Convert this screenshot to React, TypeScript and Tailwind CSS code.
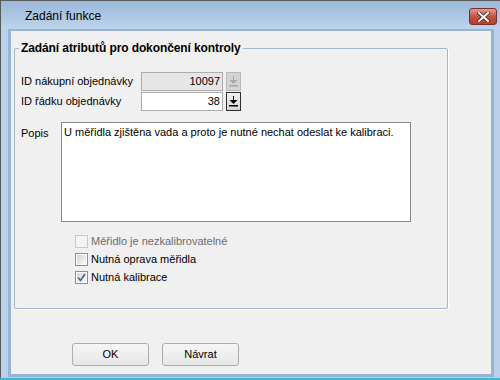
import React from "react";

const font = { fontFamily: '"Liberation Sans", Arial, sans-serif' };

function ArrowIcon({ color }: { color: string }) {
  return (
    <svg width="9" height="11" viewBox="0 0 9 11">
      <rect x="4" y="0" width="1" height="4" fill={color} />
      <polygon points="0.5,4 8.5,4 4.5,8" fill={color} />
      <rect x="0" y="9" width="9" height="1.5" fill={color} />
    </svg>
  );
}

function Checkbox({ checked, disabled, label }: { checked?: boolean; disabled?: boolean; label: string }) {
  return (
    <div className="flex items-center h-[18px]">
      <div
        className={
          disabled
            ? "w-[13px] h-[13px] border border-[#c8c8c8] bg-[#f4f4f4]"
            : "w-[13px] h-[13px] border border-[#8e8f8f] p-[1px] bg-white"
        }
      >
        {!disabled && (
          <div className="w-full h-full bg-gradient-to-br from-[#d6d6d6] to-[#f8f8f8] relative">
            {checked && (
              <svg width="9" height="9" viewBox="0 0 9 9" className="absolute left-0 top-0">
                <path d="M1 4.5 L3.5 7.5 L8 1" stroke="#4b5e96" strokeWidth="1.6" fill="none" />
              </svg>
            )}
          </div>
        )}
      </div>
      <span className={"ml-[3px] text-[11px] " + (disabled ? "text-[#6d6d6d]" : "text-black")}>{label}</span>
    </div>
  );
}

export default function App() {
  return (
    <div className="w-[500px] h-[380px] overflow-hidden relative bg-[#b9d1ea]" style={font}>
      <div className="h-full flex flex-col border-t border-l border-[#5a5a5a]">
        {/* title bar */}
        <div className="h-[28px] flex items-center bg-gradient-to-b from-[#9ab8d9] to-[#bdd4ec] pl-[24px] pr-[3px]">
          <span className="text-[12px] text-black flex-1 pt-[1px]">Zadání funkce</span>
          <div className="w-[28px] h-[17px] mt-[3px] rounded-[3px] border border-[#7a2f2a] bg-gradient-to-b from-[#e19a8e] via-[#c8503f] to-[#b5412f] flex items-center justify-center">
            <svg width="13" height="10" viewBox="0 0 13 10">
              <path d="M2 1 L11 9 M11 1 L2 9" stroke="#4a2a28" strokeWidth="3.6" strokeLinecap="square" />
              <path d="M2 1 L11 9 M11 1 L2 9" stroke="#ffffff" strokeWidth="2" strokeLinecap="square" />
            </svg>
          </div>
        </div>
        {/* client */}
        <div className="ml-[7px] mr-[6px] border-t-[2px] border-x-[3px] border-b-[3px] border-[#99b4d1] bg-[#f0f0f0] h-[348px] flex flex-col">
          <div className="ml-[3px] mt-[17px] w-[434px] h-[261px] border border-[#a0b8d0] rounded-[2px] relative shadow-[1px_1px_0_#ffffff]">
            <span className="absolute left-[4px] top-[-9px] px-[2px] bg-[#f0f0f0] text-[12px] font-bold text-black leading-[16px] tracking-[-0.1px] whitespace-nowrap">
              Zadání atributů pro dokončení kontroly
            </span>
            <div className="pl-[6px] pt-[23px] flex flex-col text-[11px] text-black">
              <div className="flex items-center h-[19px]">
                <span className="w-[120px] shrink-0 whitespace-nowrap">ID nákupní objednávky</span>
                <div className="w-[82px] h-[19px] border border-[#adadad] bg-[#e6e6e6] text-right pr-[2px] leading-[17px]">10097</div>
                <div className="ml-[3px] w-[15px] h-[19px] border border-[#b8b8b8] bg-[#d4d4d4] flex items-center justify-center">
                  <ArrowIcon color="#a8a8a8" />
                </div>
              </div>
              <div className="flex items-center h-[19px] mt-[1px]">
                <span className="w-[120px] shrink-0 whitespace-nowrap">ID řádku objednávky</span>
                <div className="w-[82px] h-[19px] border border-[#adadad] bg-white text-right pr-[2px] leading-[17px]">38</div>
                <div className="ml-[3px] w-[15px] h-[19px] border border-[#2e2e2e] bg-gradient-to-b from-[#f0f0f0] to-[#d6d6d6] flex items-center justify-center">
                  <ArrowIcon color="#000000" />
                </div>
              </div>
              <div className="flex mt-[11px]">
                <span className="w-[40px] pt-[3px]">Popis</span>
                <div className="w-[350px] h-[100px] border border-[#828790] bg-white px-[2px] pt-[2px] leading-[14px]">
                  U měřidla zjištěna vada a proto je nutné nechat odeslat ke kalibraci.
                </div>
              </div>
              <div className="flex flex-col ml-[54px] mt-[10px]">
                <Checkbox disabled label="Měřidlo je nezkalibrovatelné" />
                <Checkbox label="Nutná oprava měřidla" />
                <Checkbox checked label="Nutná kalibrace" />
              </div>
            </div>
          </div>
          <div className="flex ml-[61px] mt-[34px] gap-[13px] text-[11px]">
            <button className="w-[77px] h-[23px] rounded-[3px] border border-[#acacac] bg-gradient-to-b from-[#f6f6f6] to-[#e6e6e6] text-black">OK</button>
            <button className="w-[77px] h-[23px] rounded-[3px] border border-[#acacac] bg-gradient-to-b from-[#f6f6f6] to-[#e6e6e6] text-black">Návrat</button>
          </div>
        </div>
        <div className="flex-1" />
      </div>
      <div className="absolute left-0 right-0 bottom-0 h-[2px] bg-[#3fb6d8]" />
    </div>
  );
}
